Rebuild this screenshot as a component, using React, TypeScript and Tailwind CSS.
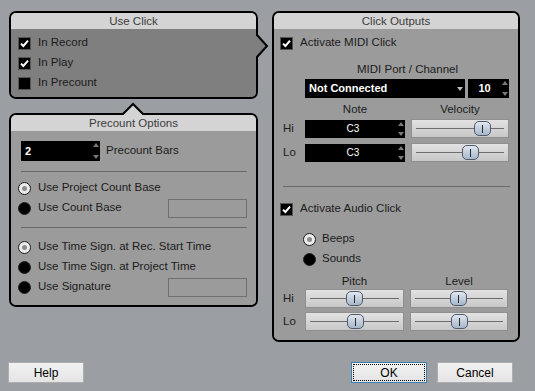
import React from "react";

function Check({ on }: { on: boolean }) {
  return (
    <span className="w-[13px] h-[13px] shrink-0 bg-black border border-[#555] flex items-center justify-center">
      {on && (
        <svg width="9" height="9" viewBox="0 0 9 9">
          <path d="M1 4.6 L3.4 7 L8 1.6" stroke="white" strokeWidth="2" fill="none" />
        </svg>
      )}
    </span>
  );
}

function Radio({ on }: { on: boolean }) {
  if (on) {
    return (
      <span className="w-[13px] h-[13px] shrink-0 rounded-full border border-[#1a1a1a] bg-[#ececec] flex items-center justify-center">
        <span className="w-[5px] h-[5px] rounded-full bg-[#8c8c8c]" />
      </span>
    );
  }
  return <span className="w-[13px] h-[13px] shrink-0 rounded-full bg-black border border-[#222]" />;
}

function Spin() {
  return (
    <div className="w-[8px] self-stretch flex flex-col justify-between items-center py-[2px]">
      <span className="w-0 h-0 border-l-[3px] border-r-[3px] border-b-[4px] border-l-transparent border-r-transparent border-b-[#7a7a7a]" />
      <span className="w-0 h-0 border-l-[3px] border-r-[3px] border-t-[4px] border-l-transparent border-r-transparent border-t-[#7a7a7a]" />
    </div>
  );
}

function Slider({ className, pos }: { className: string; pos: number }) {
  return (
    <div className={`relative h-[19px] border border-[#8f8f8f] bg-gradient-to-b from-[#e2e2e2] to-[#c8c8c8] ${className}`}>
      <div className="absolute left-[4px] right-[4px] top-[8px] h-px bg-[#6c6c6c]" />
      <div
        className="absolute top-[1px] w-[17px] h-[15px] rounded-[5px] border border-[#505a68] bg-gradient-to-b from-[#e0e7f0] to-[#a6b6ca] flex items-center justify-center"
        style={{ left: pos - 9.5 }}
      >
        <span className="w-px h-[8px] bg-[#2a2a2a]" />
      </div>
    </div>
  );
}

function Panel({
  title,
  body,
  className,
  children,
  notch,
}: {
  title: string;
  body: string;
  className: string;
  children: React.ReactNode;
  notch?: React.ReactNode;
}) {
  return (
    <div className={`relative border-2 border-black rounded-[7px] flex flex-col ${className}`}>
      <div className="h-[16px] bg-[#d4d4d4] rounded-t-[5px] text-center leading-[16px] text-[#3c3c3c]">{title}</div>
      <div className={`flex-1 rounded-b-[5px] ${body}`}>{children}</div>
      {notch}
    </div>
  );
}

export default function App() {
  return (
    <div className="w-[535px] h-[391px] bg-[#9b9fa3] text-[11.5px] text-[#1c1c1c] font-['Liberation_Sans',Arial,sans-serif] overflow-hidden">
      <div className="flex pt-[11px] pl-[9px] gap-[14px]">
        {/* left column */}
        <div className="flex flex-col gap-[14px] w-[249px]">
          <Panel
            title="Use Click"
            body="bg-[#7f7f7f]"
            className="h-[88px]"
            notch={
              <svg className="absolute left-[243px] top-[20px]" width="16" height="26" viewBox="0 0 16 26">
                <polygon points="0,2 3,2 13,13 3,24 0,24" fill="#7f7f7f" />
                <polyline points="3,0 3,2 13,13 3,24 3,26" stroke="black" strokeWidth="2" fill="none" />
              </svg>
            }
          >
            <div className="pt-[4px] pl-[7px] flex flex-col">
              {[
                ["In Record", true],
                ["In Play", true],
                ["In Precount", false],
              ].map(([label, on]) => (
                <div key={label as string} className="h-[20px] flex items-center gap-[7px]">
                  <Check on={on as boolean} />
                  <span>{label}</span>
                </div>
              ))}
            </div>
          </Panel>

          <Panel
            title="Precount Options"
            body="bg-[#9b9b9b]"
            className="h-[194px]"
            notch={
              <svg className="absolute left-[110px] top-[-14px]" width="24" height="17" viewBox="0 0 24 17">
                <polygon points="2,17 2,13 12,3 22,13 22,17" fill="#d4d4d4" />
                <polyline points="0,13 2,13 12,3 22,13 24,13" stroke="black" strokeWidth="2" fill="none" />
              </svg>
            }
          >
            <div className="pt-[10px] pl-[10px] pr-[9px]">
              <div className="flex items-center gap-[6px]">
                <div className="w-[79px] h-[20px] bg-black flex items-center pl-[4px]">
                  <span className="flex-1 text-white font-bold text-[11px]">2</span>
                  <Spin />
                </div>
                <span>Precount Bars</span>
              </div>
              <div className="h-px bg-[#6a6a6a] mt-[10px]" />
              <div className="mt-[6px] -ml-[3px] flex flex-col">
                <div className="h-[20px] flex items-center gap-[7px]">
                  <Radio on />
                  <span>Use Project Count Base</span>
                </div>
                <div className="h-[20px] flex items-center gap-[7px]">
                  <Radio on={false} />
                  <span className="flex-1">Use Count Base</span>
                  <div className="w-[79px] h-[19px] border border-[#707070]" />
                </div>
              </div>
              <div className="h-px bg-[#6a6a6a] mt-[9px]" />
              <div className="mt-[9px] -ml-[3px] flex flex-col">
                <div className="h-[20px] flex items-center gap-[7px]">
                  <Radio on />
                  <span>Use Time Sign. at Rec. Start Time</span>
                </div>
                <div className="h-[20px] flex items-center gap-[7px]">
                  <Radio on={false} />
                  <span>Use Time Sign. at Project Time</span>
                </div>
                <div className="h-[20px] flex items-center gap-[7px]">
                  <Radio on={false} />
                  <span className="flex-1">Use Signature</span>
                  <div className="w-[79px] h-[19px] border border-[#707070]" />
                </div>
              </div>
            </div>
          </Panel>
        </div>

        {/* right column */}
        <Panel title="Click Outputs" body="bg-[#9b9b9b]" className="w-[248px] h-[331px]">
          <div className="pt-[4px] pl-[6px] pr-[8px]">
            <div className="h-[20px] flex items-center gap-[7px]">
              <Check on />
              <span>Activate MIDI Click</span>
            </div>
            <div className="ml-[25px] mt-[8px] h-[16px] text-center leading-[16px]">MIDI Port / Channel</div>
            <div className="ml-[25px] mt-[2px] flex gap-[3px]">
              <div className="w-[160px] h-[19px] bg-black flex items-center pl-[4px] pr-[2px]">
                <span className="flex-1 text-white font-bold text-[11px]">Not Connected</span>
                <span className="w-0 h-0 border-l-[3px] border-r-[3px] border-t-[4px] border-l-transparent border-r-transparent border-t-[#bdbdbd]" />
              </div>
              <div className="w-[41px] h-[19px] bg-black flex items-center">
                <span className="flex-1 text-center text-white font-bold text-[11px]">10</span>
                <Spin />
              </div>
            </div>
            <div className="grid grid-cols-[19px_100px_98px] gap-x-[6px] mt-[3px]">
              <span />
              <span className="h-[16px] text-center leading-[16px]">Note</span>
              <span className="h-[16px] text-center leading-[16px]">Velocity</span>
            </div>
            <div className="grid grid-cols-[19px_100px_98px] gap-x-[6px] gap-y-[5px] items-center mt-[2px]">
              <span className="pl-[3px]">Hi</span>
              <div className="h-[18px] bg-black flex items-center">
                <span className="flex-1 text-center text-white text-[10px] pl-[4px]">C3</span>
                <Spin />
              </div>
              <Slider className="w-[98px]" pos={71} />
              <span className="pl-[3px]">Lo</span>
              <div className="h-[18px] bg-black flex items-center">
                <span className="flex-1 text-center text-white text-[10px] pl-[4px]">C3</span>
                <Spin />
              </div>
              <Slider className="w-[98px]" pos={59} />
            </div>
            <div className="h-px bg-[#6a6a6a] mt-[24px] ml-[3px]" />
            <div className="mt-[12px] h-[20px] flex items-center gap-[7px]">
              <Check on />
              <span>Activate Audio Click</span>
            </div>
            <div className="mt-[10px] ml-[23px] flex flex-col">
              <div className="h-[20px] flex items-center gap-[6px]">
                <Radio on />
                <span>Beeps</span>
              </div>
              <div className="h-[20px] flex items-center gap-[6px]">
                <Radio on={false} />
                <span>Sounds</span>
              </div>
            </div>
            <div className="grid grid-cols-[19px_99px_98px] gap-x-[6px] mt-[5px]">
              <span />
              <span className="h-[15px] text-center leading-[15px]">Pitch</span>
              <span className="h-[15px] text-center leading-[15px]">Level</span>
            </div>
            <div className="grid grid-cols-[19px_99px_98px] gap-x-[6px] gap-y-[4px] items-center">
              <span className="pl-[3px]">Hi</span>
              <Slider className="w-[99px]" pos={49} />
              <Slider className="w-[98px]" pos={48} />
              <span className="pl-[3px]">Lo</span>
              <Slider className="w-[99px]" pos={50} />
              <Slider className="w-[98px]" pos={49} />
            </div>
          </div>
        </Panel>
      </div>

      <div className="flex items-center mt-[20px] pl-[8px] pr-[22px] text-[12px] text-black">
        <button className="w-[76px] h-[21px] border border-[#adadad] bg-gradient-to-b from-[#f2f2f2] to-[#e4e4e4]">Help</button>
        <div className="flex-1" />
        <button className="w-[76px] h-[21px] border border-[#3c7fb1] bg-gradient-to-b from-[#f2f2f2] to-[#e4e4e4] p-[1px]">
          <span className="w-full h-full flex items-center justify-center border border-dotted border-black">OK</span>
        </button>
        <button className="ml-[10px] w-[76px] h-[21px] border border-[#adadad] bg-gradient-to-b from-[#f2f2f2] to-[#e4e4e4]">Cancel</button>
      </div>
    </div>
  );
}
